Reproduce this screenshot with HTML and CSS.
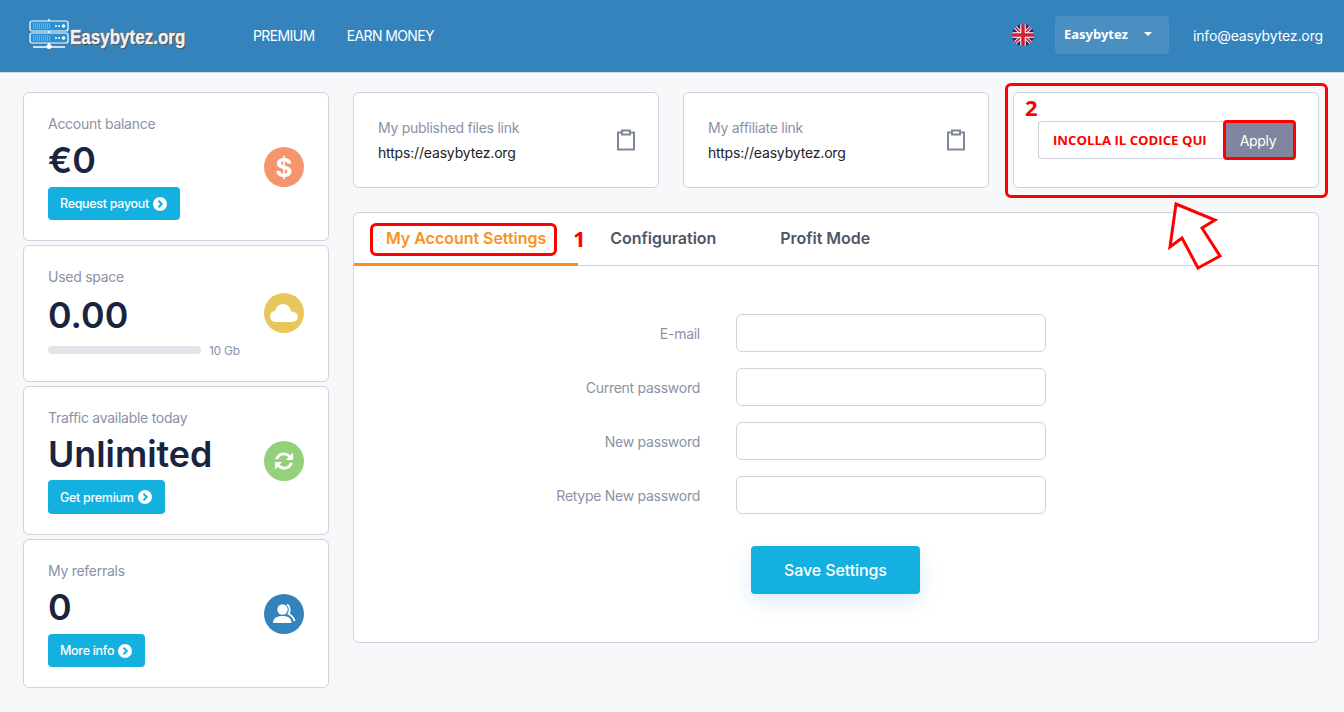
FILE: index.html
```html
<!DOCTYPE html>
<html lang="en">
<head>
    <meta charset="UTF-8">
    <meta name="viewport" content="width=device-width, initial-scale=1.0">
    <title>My Account</title>
    <link rel="stylesheet" href="styles.css">
</head>
<body>
    <header class="topbar">
        <a class="logo" href="#">
            <svg class="logo-icon" width="40" height="30" viewBox="0 0 40 30">
                <path d="M20 0v28M4 28h32" stroke="#fff" stroke-width="1.5"/>
                <circle cx="20" cy="27.5" r="2.5" fill="#fff"/>
                <rect x="1" y="2" width="38" height="10" rx="2" fill="#2b8fd0" stroke="#fff" stroke-width="1.2"/>
                <rect x="1" y="14" width="38" height="10" rx="2" fill="#2b8fd0" stroke="#fff" stroke-width="1.2"/>
                <path d="M4 5h18M4 7h18M4 9h18M4 17h18M4 19h18M4 21h18" stroke="#a9d6f2" stroke-width="1" stroke-dasharray="1 1"/>
                <path d="M26 7h2M29 7h2M26 19h2M29 19h2" stroke="#fff" stroke-width="1.5"/>
                <circle cx="34.500" cy="7" r="1.800" fill="#fff"/>
                <circle cx="34.500" cy="19" r="1.800" fill="#fff"/>
            </svg>
            <span class="logo-text">Easybytez.org</span>
        </a>
        <nav class="topnav">
            <a href="#">PREMIUM</a>
            <a href="#">EARN MONEY</a>
        </nav>
        <div class="topbar-right">
            <svg class="flag" width="22" height="22" viewBox="0 0 22 22">
                <defs><clipPath id="flag-clip"><circle cx="11" cy="11" r="11"/></clipPath></defs>
                <g clip-path="url(#flag-clip)">
                    <rect width="22" height="22" fill="#1f2a78"/>
                    <path d="M0 0L22 22M22 0L0 22" stroke="#fff" stroke-width="3.500"/>
                    <path d="M0 0L22 22M22 0L0 22" stroke="#d3202f" stroke-width="1.800"/>
                    <path d="M11 0V22M0 11H22" stroke="#fff" stroke-width="5.500"/>
                    <path d="M11 0V22M0 11H22" stroke="#d3202f" stroke-width="3.500"/>
                </g>
            </svg>
            <button class="user-menu">Easybytez <span class="caret"></span></button>
            <a class="user-mail" href="#">info@easybytez.org</a>
        </div>
    </header>

    <div class="page">
        <aside class="sidebar">
            <div class="card stat">
                <div>
                    <div class="label">Account balance</div>
                    <div class="value">€0</div>
                    <a class="btn-small" href="#">Request payout
                        <svg class="chev" width="14" height="14" viewBox="0 0 14 14"><circle cx="7" cy="7" r="7" fill="#fff"/><path d="M5.500 3.800L8.700 7L5.500 10.200" fill="none" stroke="#14b0e0" stroke-width="2"/></svg>
                    </a>
                </div>
                <div class="stat-icon icon-orange">$</div>
            </div>
            <div class="card stat stat-space">
                <div>
                    <div class="label">Used space</div>
                    <div class="value">0.00</div>
                    <div class="usage"><div class="usage-bar"></div><span>10 Gb</span></div>
                </div>
                <div class="stat-icon icon-yellow">
                    <svg width="30" height="22" viewBox="0 0 30 22"><path d="M7 20C3.500 20 1 17.600 1 14.500C1 11.600 3.200 9.400 6 9.100C7 4.900 10.300 2 14 2C18 2 21.300 4.700 22.100 9.400C25.600 9.300 29 11.500 29 14.800C29 17.900 26.500 20 23 20Z" fill="#fff"/></svg>
                </div>
            </div>
            <div class="card stat stat-traffic">
                <div>
                    <div class="label">Traffic available today</div>
                    <div class="value">Unlimited</div>
                    <a class="btn-small" href="#">Get premium
                        <svg class="chev" width="14" height="14" viewBox="0 0 14 14"><circle cx="7" cy="7" r="7" fill="#fff"/><path d="M5.500 3.800L8.700 7L5.500 10.200" fill="none" stroke="#14b0e0" stroke-width="2"/></svg>
                    </a>
                </div>
                <div class="stat-icon icon-green">
                    <svg width="24" height="24" viewBox="0 0 22 22"><path d="M3 9.500C3.700 5.800 7 3.200 10.800 3.200C13.200 3.200 15.300 4.200 16.700 5.800L19.300 3.300V10H12.700L15 7.700C14 6.500 12.500 5.800 10.800 5.800C8.400 5.800 6.400 7.300 5.700 9.500ZM19 12.500C18.300 16.200 15 18.800 11.200 18.800C8.800 18.800 6.700 17.800 5.300 16.200L2.700 18.700V12H9.300L7 14.300C8 15.500 9.500 16.200 11.200 16.200C13.600 16.200 15.600 14.700 16.300 12.500Z" fill="#fff"/></svg>
                </div>
            </div>
            <div class="card stat">
                <div>
                    <div class="label">My referrals</div>
                    <div class="value">0</div>
                    <a class="btn-small" href="#">More info
                        <svg class="chev" width="14" height="14" viewBox="0 0 14 14"><circle cx="7" cy="7" r="7" fill="#fff"/><path d="M5.500 3.800L8.700 7L5.500 10.200" fill="none" stroke="#14b0e0" stroke-width="2"/></svg>
                    </a>
                </div>
                <div class="stat-icon icon-blue">
                    <svg width="24" height="22" viewBox="0 0 24 22"><circle cx="10.500" cy="6.500" r="5.200" fill="#fff"/><path d="M1 20C1 15.500 4.500 13 10.500 13C16.500 13 19.500 15.500 19.500 20Z" fill="#fff"/><path d="M15 1.500C18 3 18.500 8 16.500 10.800C19.500 12.500 21.800 14.500 22.500 18" fill="none" stroke="#fff" stroke-width="1.800"/></svg>
                </div>
            </div>
        </aside>

        <main class="content">
            <div class="link-row">
                <div class="card link-card">
                    <div>
                        <div class="link-label">My published files link</div>
                        <div class="link-url">https://easybytez.org</div>
                    </div>
                    <svg class="clip" width="20" height="22" viewBox="0 0 20 22"><path d="M6 3.500H2V20.500H18V3.500H14M6 1.500H14V5.500H6Z" fill="none" stroke="#7f869e" stroke-width="2"/></svg>
                </div>
                <div class="card link-card">
                    <div>
                        <div class="link-label">My affiliate link</div>
                        <div class="link-url">https://easybytez.org</div>
                    </div>
                    <svg class="clip" width="20" height="22" viewBox="0 0 20 22"><path d="M6 3.500H2V20.500H18V3.500H14M6 1.500H14V5.500H6Z" fill="none" stroke="#7f869e" stroke-width="2"/></svg>
                </div>
                <div class="card coupon-card">
                    <div class="coupon-form">
                        <div class="coupon-input">INCOLLA IL CODICE QUI</div>
                        <button class="coupon-btn">Apply</button>
                    </div>
                    <span class="mark-box"></span>
                    <span class="mark-num mark-two">2</span>
                    <svg class="mark-arrow" width="56" height="70" viewBox="0 0 56 70"><path d="M8 2L47 18L34 26L52 54L30 66L14 36L2 45Z" fill="#fff" stroke="#f00" stroke-width="3"/></svg>
                </div>
            </div>

            <section class="card panel">
                <div class="tabs">
                    <a class="tab active" href="#">My Account Settings<span class="mark-tab"></span><span class="mark-num mark-one">1</span></a>
                    <a class="tab" href="#">Configuration</a>
                    <a class="tab" href="#">Profit Mode</a>
                </div>
                <form class="settings">
                    <div class="form-grid">
                        <label>E-mail</label><input type="text">
                        <label>Current password</label><input type="password">
                        <label>New password</label><input type="password">
                        <label>Retype New password</label><input type="password">
                    </div>
                    <button class="btn-save" type="button">Save Settings</button>
                </form>
            </section>
        </main>
    </div>
</body>
</html>
```

FILE: styles.css
```css
* {
    box-sizing: border-box;
}
body {
    margin: 0;
    background-color: #f7f8fa;
    font-family: 'Inter', 'Liberation Sans', sans-serif;
    font-size: 14px;
    letter-spacing: -0.27px;
    color: #1a2340;
}
a {
    text-decoration: none;
    color: inherit;
}

/* top bar */
.topbar {
    display: flex;
    align-items: center;
    height: 73px;
    padding: 0 21px 1px 29px;
    background-color: #3583bc;
    border-bottom: 1px solid #d3d8e0;
    color: #fff;
}
.logo {
    display: flex;
    align-items: center;
    width: 224px;
    margin-top: -4px;
}
.logo-text {
    display: inline-block;
    margin-left: 1px;
    margin-top: 7px;
    font-family: 'Liberation Sans', sans-serif;
    font-weight: 700;
    font-size: 21px;
    letter-spacing: 0;
    color: #f2f2f2;
    -webkit-text-stroke: 0.5px #f2f2f2;
    text-shadow: 1px 1px 0 #333, -1px 0 0 #555, 0 -1px 0 #555;
    transform: scaleX(0.81);
    transform-origin: left center;
}
.topnav {
    display: flex;
    gap: 32px;
    letter-spacing: -0.6px;
}
.topbar-right {
    display: flex;
    align-items: center;
    margin-left: auto;
}
.flag {
    margin-right: 21px;
    margin-top: -2px;
}
.user-menu {
    display: flex;
    align-items: center;
    width: 114px;
    height: 38px;
    margin-right: 24px;
    margin-top: -1px;
    padding: 0 9px 2px;
    border: none;
    border-radius: 4px;
    background-color: rgba(255, 255, 255, 0.1);
    color: #fff;
    font-family: 'Noto Sans', sans-serif;
    font-weight: 700;
    font-size: 13px;
}
.caret {
    margin-left: 16px;
    border-left: 4px solid transparent;
    border-right: 4px solid transparent;
    border-top: 4px solid #fff;
}
.user-mail {
    letter-spacing: -0.13px;
}

/* layout */
.page {
    display: flex;
    gap: 24px;
    padding: 19px 25px 24px 23px;
}
.card {
    background-color: #fff;
    border: 1px solid #cdd2dc;
    border-radius: 6px;
}
.sidebar {
    display: flex;
    flex-direction: column;
    gap: 4px;
    width: 306px;
    flex-shrink: 0;
}
.content {
    flex: 1;
}

/* sidebar stats */
.stat {
    display: flex;
    align-items: center;
    justify-content: space-between;
    padding: 21px 24px 20px;
}
.stat-space {
    padding-bottom: 23px;
}
.stat-space .label {
    margin-bottom: 8px;
}
.stat-traffic .btn-small {
    height: 34px;
    margin-top: -1px;
}
.label {
    line-height: 20px;
    margin-bottom: 6px;
    color: #8a92a6;
}
.value {
    line-height: 40px;
    margin-bottom: 7px;
    font-size: 35.8px;
    font-weight: 600;
    letter-spacing: 0;
}
.btn-small {
    display: inline-flex;
    align-items: center;
    gap: 4px;
    height: 33px;
    padding: 0 13px 0 12px;
    border-radius: 4px;
    background-color: #14b0e0;
    color: #fff;
    font-size: 12.5px;
    font-weight: 500;
    letter-spacing: -0.3px;
    vertical-align: top;
}
.usage {
    display: flex;
    align-items: center;
    gap: 8px;
    height: 16px;
    font-size: 12px;
    color: #8a92a6;
}
.usage-bar {
    width: 153px;
    height: 8px;
    border-radius: 4px;
    background-color: #e2e4ea;
}
.stat-icon {
    display: flex;
    align-items: center;
    justify-content: center;
    width: 40px;
    height: 40px;
    border-radius: 50%;
    color: #fff;
    font-size: 26px;
    font-weight: 700;
}
.icon-orange { background-color: #f4956e; }
.icon-yellow { background-color: #e8c65a; }
.icon-green { background-color: #95d07a; }
.icon-blue { background-color: #3583bc; }

/* link cards */
.link-row {
    display: grid;
    grid-template-columns: repeat(3, 1fr);
    gap: 24px;
    margin-bottom: 24px;
}
.link-card {
    display: flex;
    align-items: center;
    justify-content: space-between;
    height: 96px;
    padding: 0 22px 0 24px;
}
.link-label {
    line-height: 20px;
    margin-bottom: 5px;
    color: #8a92a6;
}
.link-url {
    line-height: 20px;
    letter-spacing: -0.17px;
    color: #222;
}
.coupon-card {
    position: relative;
    height: 96px;
    padding: 28px 0 0 24px;
}
.coupon-form {
    display: flex;
}
.coupon-input {
    display: flex;
    align-items: center;
    width: 185px;
    height: 38px;
    padding-left: 14px;
    border: 1px solid #cdd2dc;
    border-right: none;
    border-radius: 4px 0 0 4px;
    font-family: 'Open Sans', sans-serif;
    font-size: 13.2px;
    font-weight: 700;
    letter-spacing: 0;
    color: #f00;
}
.coupon-btn {
    width: 73px;
    height: 40px;
    margin-top: -1px;
    padding: 0 3px 0 0;
    border: 3px solid #f00;
    border-radius: 4px;
    background-color: #7f869e;
    color: #fff;
    font-family: 'Inter', sans-serif;
    font-size: 14px;
    letter-spacing: -0.3px;
}

/* red marks drawn over the screenshot */
.mark-box {
    position: absolute;
    top: -10px;
    left: -9px;
    width: 323px;
    height: 115px;
    border: 3px solid #f00;
    border-radius: 6px;
}
.mark-num {
    position: absolute;
    font-family: 'Open Sans', sans-serif;
    font-size: 22px;
    line-height: 30px;
    font-weight: 700;
    letter-spacing: 0;
    color: #f00;
}
.mark-two {
    top: -1px;
    left: 11px;
}
.mark-one {
    top: 10px;
    left: 219px;
}
.mark-arrow {
    position: absolute;
    top: 109px;
    left: 154px;
}
.mark-tab {
    position: absolute;
    top: 10px;
    left: 16px;
    width: 187px;
    height: 33px;
    border: 3px solid #f00;
    border-radius: 6px;
}

/* tabs and form */
.tabs {
    display: flex;
    height: 53px;
    border-bottom: 1px solid #cdd2dc;
}
.tab {
    position: relative;
    height: 52px;
    padding: 0 32px;
    line-height: 50px;
    font-size: 16px;
    font-weight: 600;
    letter-spacing: -0.03px;
    color: #4f5668;
}
.tab.active {
    height: 53px;
    border-bottom: 3px solid #f7931e;
    color: #f7931e;
}
.settings {
    padding: 48px 1px 48px 0;
    text-align: center;
}
.form-grid {
    display: grid;
    grid-template-columns: 346px 310px;
    column-gap: 36px;
    row-gap: 16px;
    align-items: center;
    text-align: right;
    color: #8a92a6;
}
.form-grid input {
    height: 38px;
    border: 1px solid #cdd2dc;
    border-radius: 6px;
    background-color: #fff;
}
.btn-save {
    width: 169px;
    height: 48px;
    margin-top: 32px;
    border: none;
    border-radius: 4px;
    background-color: #14b0e0;
    box-shadow: 0 8px 20px rgba(20, 120, 224, 0.15);
    color: #fff;
    font-family: 'Inter', sans-serif;
    font-size: 16px;
    font-weight: 500;
    letter-spacing: -0.1px;
}
```
